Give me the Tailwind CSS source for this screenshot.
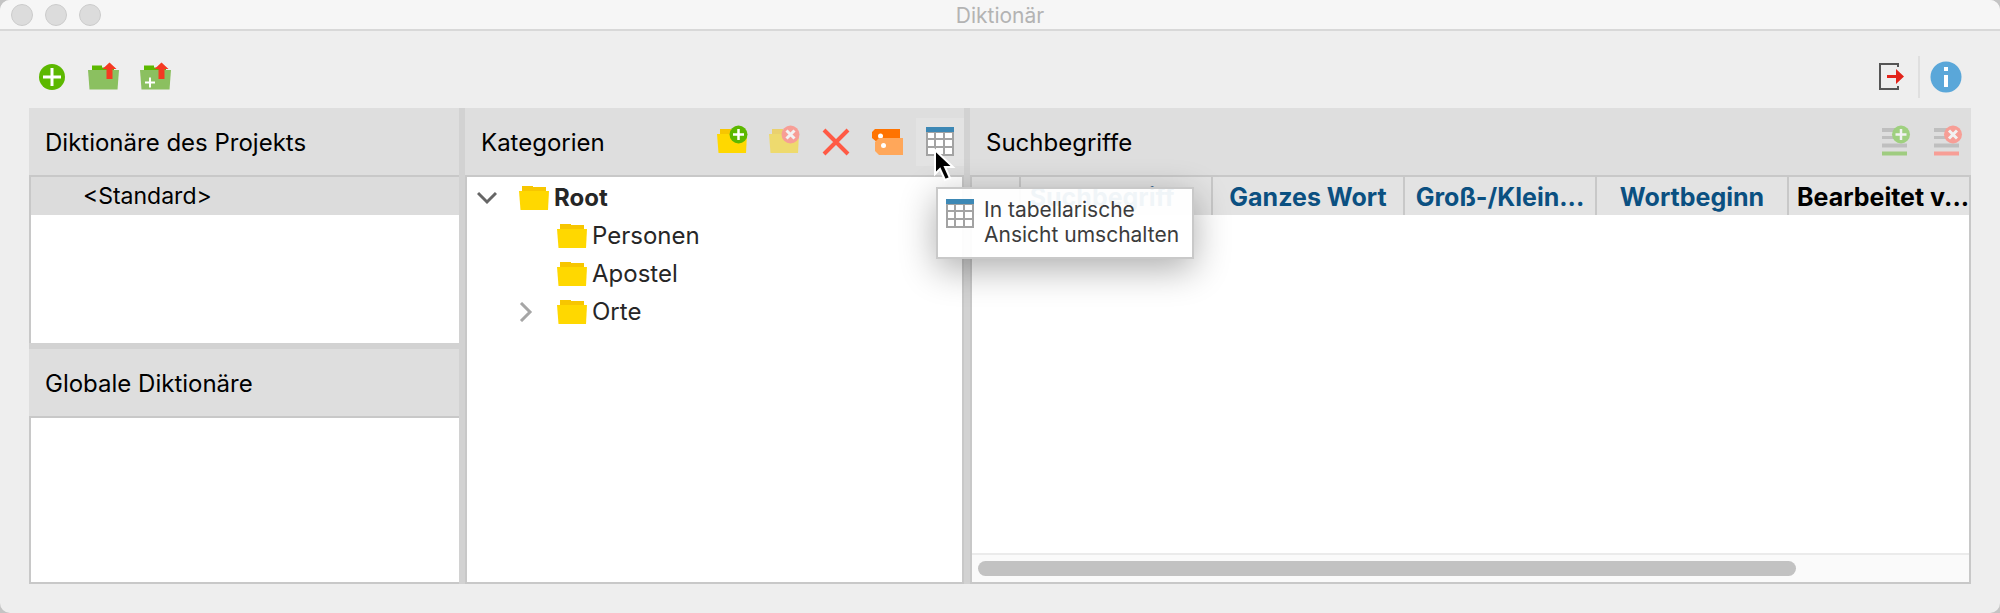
<!DOCTYPE html>
<html lang="de">
<head>
  <meta charset="UTF-8" />
  <meta name="viewport" content="width=device-width, initial-scale=1.0" />
  <title>Diktionär</title>
  <script src="https://cdn.jsdelivr.net/npm/@tailwindcss/browser@4"></script>
</head>
<body class="bg-[#c4c4c4] font-['Inter',sans-serif] text-[24px] leading-[30px] text-black">

  <!-- Shared icon shapes -->
  <svg class="hidden">
    <symbol id="folder" viewBox="0 0 30 26">
      <path d="M3 1h11v1h13v6H3z" fill="#f7c600" />
      <path d="M0 6h30l-1 19H1.500z" fill="#ffd800" />
    </symbol>
    <symbol id="grid" viewBox="0 0 28 29">
      <path d="M0 0h28v29H0z" fill="#a3a3a3" />
      <path d="M0 0h28v5H0z" fill="#3d88b5" />
      <path d="M2 6h6v5H2zM10 6h7v5h-7zM19 6h7v5h-7zM2 13h6v6H2zM10 13h7v6h-7zM19 13h7v6h-7zM2 21h6v6H2zM10 21h7v6h-7zM19 21h7v6h-7z" fill="#fff" />
    </symbol>
  </svg>

  <div class="min-h-screen flex flex-col bg-[#eeeeee] rounded-[10px] overflow-hidden">

    <!-- Title bar -->
    <header class="relative h-[31px] pt-0.5 flex items-center justify-center bg-[#f6f6f6] border-b-2 border-[#d8d8d8]">
      <div class="absolute left-[11px] top-1 flex gap-3">
        <button aria-label="Schließen" class="size-[22px] rounded-full bg-[#dcdcdc] border border-[#cbcbcb]"></button>
        <button aria-label="Minimieren" class="size-[22px] rounded-full bg-[#dcdcdc] border border-[#cbcbcb]"></button>
        <button aria-label="Maximieren" class="size-[22px] rounded-full bg-[#dcdcdc] border border-[#cbcbcb]"></button>
      </div>
      <h1 class="text-[21px] text-[#b3b3b3]">Diktionär</h1>
    </header>

    <!-- Toolbar -->
    <div class="h-[77px] pt-[15px] pl-7 pr-[30px] flex items-center justify-between">
      <div class="flex gap-1">
        <button aria-label="Neues Diktionär" class="size-12">
          <svg viewBox="0 0 48 48">
            <circle cx="24" cy="24" r="13" fill="#5cb800" />
            <path d="M24 15v18M15 24h18" stroke="#fff" stroke-width="3" />
          </svg>
        </button>
        <button aria-label="Diktionär öffnen" class="size-12">
          <svg viewBox="0 0 48 48">
            <path d="M12 12.500h10v2h12v4H12z" fill="#5cb800" />
            <path d="M8 17h31l-1.500 19.500h-28z" fill="#8bc060" />
            <path d="M29.500 9.500l7 6.500h-4v10h-6V16h-4z" fill="#f53a22" />
          </svg>
        </button>
        <button aria-label="Diktionär importieren" class="size-12">
          <svg viewBox="0 0 48 48">
            <path d="M12 12.500h10v2h12v4H12z" fill="#5cb800" />
            <path d="M8 17h31l-1.500 19.500h-28z" fill="#8bc060" />
            <path d="M29.500 9.500l7 6.500h-4v10h-6V16h-4z" fill="#f53a22" />
            <path d="M18 24.500v10M13 29.500h10" stroke="#fff" stroke-width="2" />
          </svg>
        </button>
      </div>
      <div class="flex items-center">
        <button aria-label="Exportieren" class="size-12">
          <svg viewBox="0 0 48 48" fill="none">
            <path d="M30 14v-3H12v25h18v-3" stroke="#555" stroke-width="2" />
            <path d="M19 22h9v-6l8 7.500-8 7.500v-6h-9z" fill="#e2231a" />
          </svg>
        </button>
        <div class="w-0.5 h-[42px] mx-0.5 bg-[#dfdfdf]"></div>
        <button aria-label="Information" class="size-12">
          <svg viewBox="0 0 48 48">
            <circle cx="24" cy="24" r="15.500" fill="#5aa7d9" />
            <path d="M22 14h4v4h-4zM22 22h4v12h-4z" fill="#fff" />
          </svg>
        </button>
      </div>
    </div>

    <!-- Panels -->
    <main class="flex-1 flex mx-[29px] mb-[29px] bg-[#d2d2d2]">

      <!-- Dictionaries -->
      <div class="w-[430px] shrink-0 flex flex-col gap-1.5">
        <section class="flex-1 flex flex-col">
          <h2 class="h-[67px] pt-0.5 px-4 flex items-center bg-[#dedede]">Diktionäre des Projekts</h2>
          <ul class="flex-1 bg-white border-t-2 border-l-2 border-[#c8c8c8] text-[23px]">
            <li class="h-[38px] pl-[52px] flex items-center bg-[#dcdcdc]">&lt;Standard&gt;</li>
          </ul>
        </section>
        <section class="flex-1 flex flex-col">
          <h2 class="h-[67px] pt-0.5 px-4 flex items-center bg-[#dedede]">Globale Diktionäre</h2>
          <div class="flex-1 bg-white border-y-2 border-l-2 border-[#c8c8c8]"></div>
        </section>
      </div>

      <!-- Categories -->
      <section class="w-[499px] shrink-0 ml-1.5 flex flex-col">
        <div class="h-[67px] pl-4 flex items-center justify-between bg-[#dedede]">
          <h2 class="pt-0.5">Kategorien</h2>
          <div class="flex gap-1">
            <button aria-label="Neue Kategorie" class="size-12">
              <svg viewBox="0 0 48 48">
                <use href="#folder" x="9" y="10" width="30" height="26" />
                <circle cx="30.500" cy="16.500" r="9" fill="#5cb800" />
                <path d="M30.500 11v11M25 16.500h11" stroke="#fff" stroke-width="2.500" />
              </svg>
            </button>
            <button aria-label="Kategorie entfernen" disabled class="size-12">
              <svg viewBox="0 0 48 48">
                <use href="#folder" x="9" y="10" width="30" height="26" opacity="0.5" />
                <circle cx="30.500" cy="16.500" r="9" fill="#f79e96" />
                <path d="M26.500 12.500l8 8M34.500 12.500l-8 8" stroke="#f2f2f2" stroke-width="3" />
              </svg>
            </button>
            <button aria-label="Löschen" class="size-12">
              <svg viewBox="0 0 48 48">
                <path d="M12 12l24 24M36 12L12 36" stroke="#ff5a45" stroke-width="4" />
              </svg>
            </button>
            <button aria-label="Etikett" class="size-12">
              <svg viewBox="0 0 48 48">
                <path d="M11 11h25v10H16l-2 4-6-5v-6z" fill="#ff7300" />
                <circle cx="16.500" cy="18" r="2.500" fill="#fff" />
                <path d="M15 20h24v17H15l-4-4v-9z" fill="#ffa75a" />
                <circle cx="19.500" cy="27.500" r="2.500" fill="#fff" />
              </svg>
            </button>
            <div class="relative z-10">
              <button aria-label="In tabellarische Ansicht umschalten" class="block size-12 bg-[#e3e3e3]">
                <svg viewBox="0 0 48 48">
                  <use href="#grid" x="10" y="9" width="28" height="29" />
                </svg>
              </button>
              <!-- Tooltip -->
              <div role="tooltip" class="absolute left-5 top-[69px] w-[258px] h-[72px] pl-2 pt-2 flex gap-[10px] bg-white/94 border-2 border-[#c9c9c9] shadow-[0_10px_36px_rgba(0,0,0,0.32)] text-[21px] leading-[25px] text-[#3c3c3c] whitespace-nowrap">
                <svg class="w-7 h-[29px] mt-0.5 shrink-0"><use href="#grid" /></svg>
                <p>In tabellarische<br />Ansicht umschalten</p>
              </div>
              <!-- Mouse pointer -->
              <svg class="absolute left-[17px] top-[29px] w-[24px] h-[36px]" viewBox="0 0 24 36">
                <path d="M2 3v24l5-5 5 11 5-2-5-11h8z" fill="#000" stroke="#fff" stroke-width="2" />
              </svg>
            </div>
          </div>
        </div>
        <ul class="flex-1 pt-0.5 bg-white border-2 border-[#c8c8c8] text-[#262626]">
          <li class="h-[38px] pl-[10px] flex items-center">
            <svg class="w-5 h-5 mr-[22px]" viewBox="0 0 20 20" fill="none"><path d="M1 5l9 9 9-9" stroke="#666" stroke-width="3" /></svg>
            <svg class="w-[30px] h-[26px] mr-[5px]"><use href="#folder" /></svg>
            <span class="font-bold">Root</span>
          </li>
          <li class="h-[38px] pl-[90px] flex items-center">
            <svg class="w-[30px] h-[26px] mr-[5px]"><use href="#folder" /></svg>
            <span>Personen</span>
          </li>
          <li class="h-[38px] pl-[90px] flex items-center">
            <svg class="w-[30px] h-[26px] mr-[5px]"><use href="#folder" /></svg>
            <span>Apostel</span>
          </li>
          <li class="h-[38px] pl-12 flex items-center">
            <svg class="w-5 h-5 mr-[22px]" viewBox="0 0 20 20" fill="none"><path d="M6 1l9 9-9 9" stroke="#a6a6a6" stroke-width="3" /></svg>
            <svg class="w-[30px] h-[26px] mr-[5px]"><use href="#folder" /></svg>
            <span>Orte</span>
          </li>
        </ul>
      </section>

      <!-- Search terms -->
      <section class="flex-1 min-w-0 ml-1.5 flex flex-col">
        <div class="h-[67px] pl-4 pr-0.5 flex items-center justify-between bg-[#dedede]">
          <h2 class="pt-0.5">Suchbegriffe</h2>
          <div class="flex gap-1">
            <button aria-label="Suchbegriff hinzufügen" disabled class="size-12">
              <svg viewBox="0 0 48 48">
                <path d="M13 10h25v4H13zM13 18h25v3H13zM13 25.500h25v4H13z" fill="#bfbfbf" />
                <path d="M13 33.500h25v4H13z" fill="#9fcc80" />
                <circle cx="32" cy="16.500" r="9" fill="#9fd07f" />
                <path d="M32 11v11M26.500 16.500h11" stroke="#f2f2f2" stroke-width="2.500" />
              </svg>
            </button>
            <button aria-label="Suchbegriff entfernen" disabled class="size-12">
              <svg viewBox="0 0 48 48">
                <path d="M13 10h25v4H13zM13 18h25v3H13zM13 25.500h25v4H13z" fill="#bfbfbf" />
                <path d="M13 33.500h25v4H13z" fill="#f79e96" />
                <circle cx="32" cy="16.500" r="9" fill="#f79e96" />
                <path d="M28 12.500l8 8M36 12.500l-8 8" stroke="#f2f2f2" stroke-width="3" />
              </svg>
            </button>
          </div>
        </div>
        <div class="flex-1 flex flex-col bg-white border-2 border-[#c8c8c8]">
          <table class="w-full table-fixed border-collapse text-[25px]">
            <thead>
              <tr class="h-[38px] bg-[#e3e3e3] text-[#0b5081]">
                <th class="w-12 border-r-2 border-[#c8c8c8]"></th>
                <th class="w-48 p-0 pt-0.5 pr-7 border-r-2 border-[#c8c8c8] font-bold">Suchbegriff</th>
                <th class="w-48 p-0 pt-0.5 border-r-2 border-[#c8c8c8] font-bold">Ganzes Wort</th>
                <th class="w-48 p-0 pt-0.5 border-r-2 border-[#c8c8c8] font-bold">Groß-/Klein...</th>
                <th class="w-48 p-0 pt-0.5 border-r-2 border-[#c8c8c8] font-bold">Wortbeginn</th>
                <th class="p-0 pt-0.5 pl-2 text-left font-bold text-black whitespace-nowrap">Bearbeitet v...</th>
              </tr>
            </thead>
          </table>
          <!-- Horizontal scrollbar -->
          <div class="mt-auto h-[29px] pt-1.5 px-1.5 bg-[#fafafa] border-t-2 border-[#ebebeb]">
            <div class="w-[83%] h-[15px] rounded-full bg-[#c2c2c2]"></div>
          </div>
        </div>
      </section>
    </main>
  </div>
</body>
</html>
